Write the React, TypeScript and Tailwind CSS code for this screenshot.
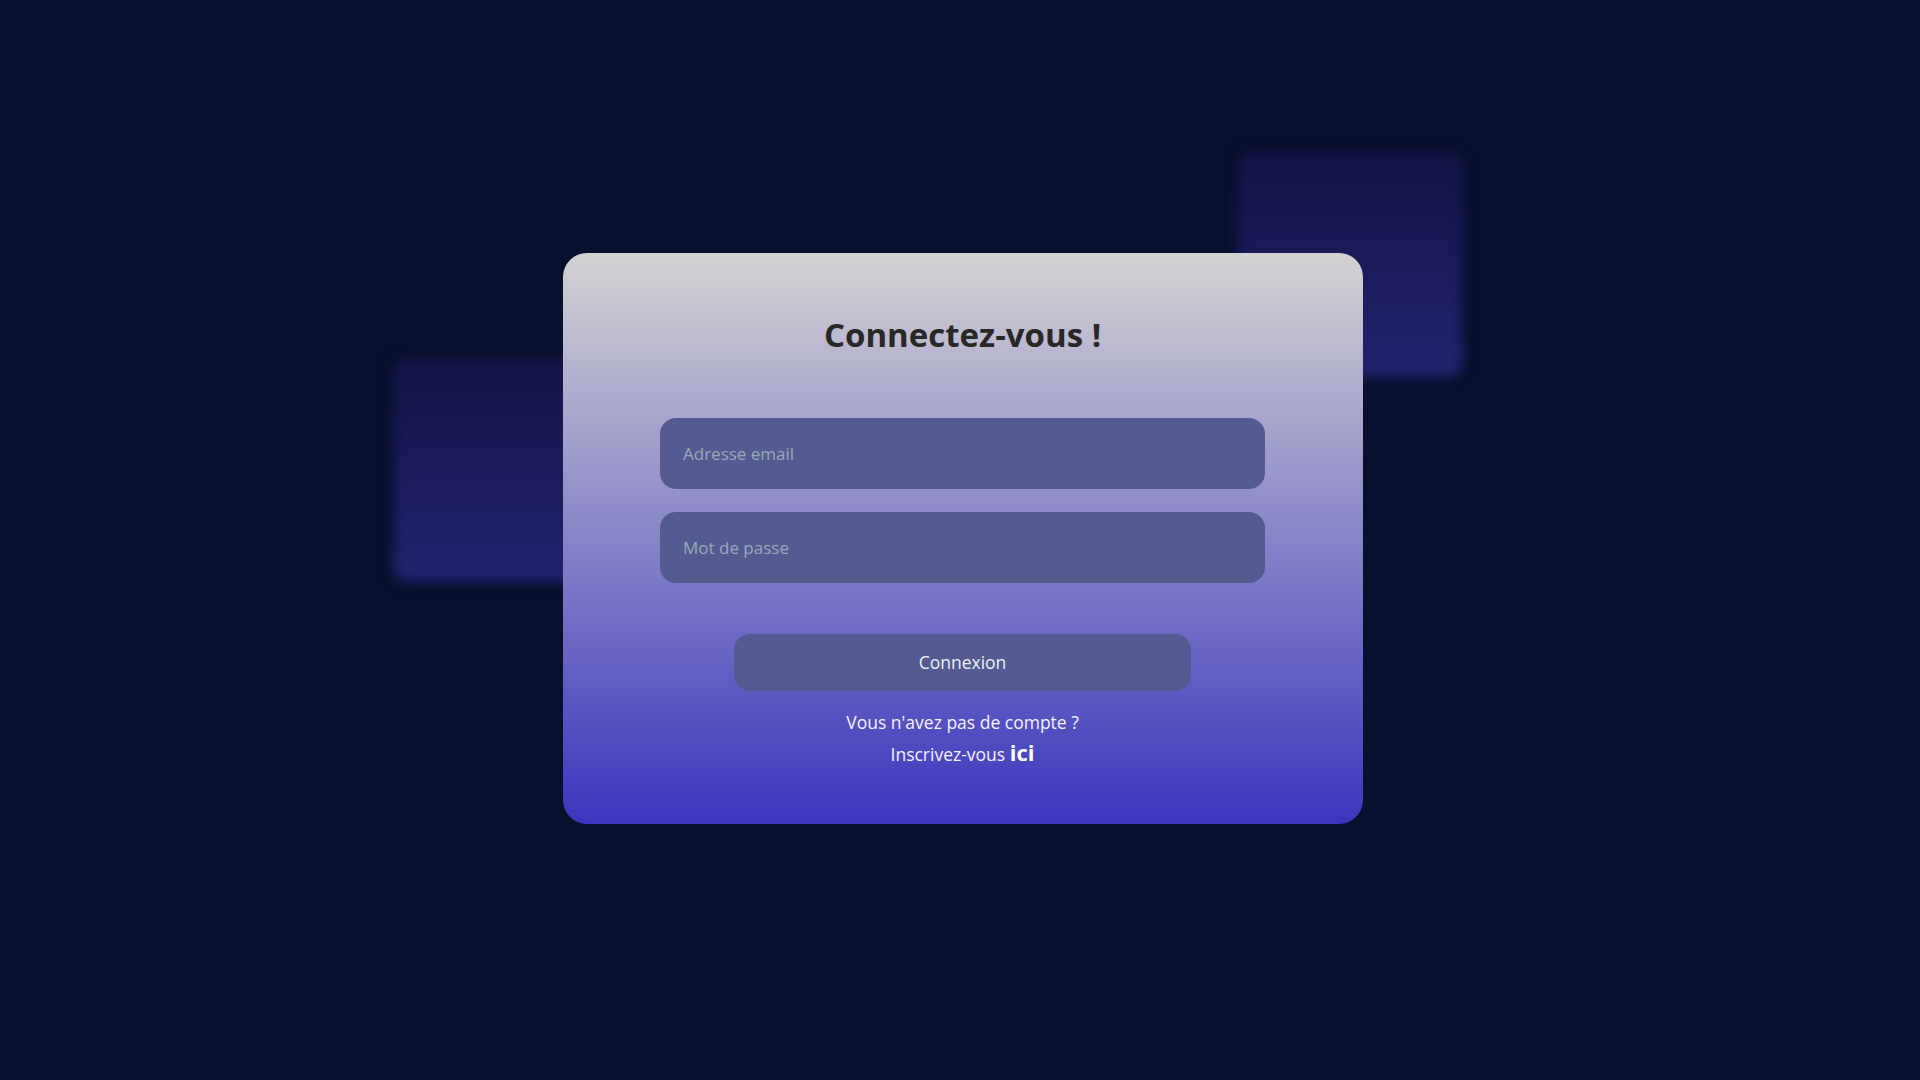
const LoginCard: React.FC = () => {
  return (
    <div className="relative w-[800px] h-[571px]">
      {/* blurred squares behind the card */}
      <div className="absolute left-[675px] top-[-101px] w-[225px] h-[225px] rounded-[14px] bg-[linear-gradient(to_bottom,#151446,#21226f)] blur-[6px]" />
      <div className="absolute left-[-170px] top-[104px] w-[225px] h-[225px] rounded-[14px] bg-[linear-gradient(to_bottom,#151446,#21226f)] blur-[6px]" />

      <div className="relative flex flex-col items-center w-full h-full rounded-[24px] bg-[linear-gradient(to_bottom,#d3d3d3,#3b35bd)] pt-[62px]">
        <h1 className="text-[33px] leading-[40px] font-bold text-[#2a2826]">
          Connectez-vous !
        </h1>

        <div className="flex flex-col gap-[23px] mt-[63px]">
          <input
            type="email"
            placeholder="Adresse email"
            className="w-[605px] h-[71px] rounded-[16px] bg-[#535b91] px-[23px] text-[17px] text-white placeholder:text-[#9ea6b9] outline-none"
          />
          <input
            type="password"
            placeholder="Mot de passe"
            className="w-[605px] h-[71px] rounded-[16px] bg-[#535b91] px-[23px] text-[17px] text-white placeholder:text-[#9ea6b9] outline-none"
          />
        </div>

        <button className="mt-[51px] w-[457px] h-[57px] rounded-[16px] bg-[#535b91] text-[17.5px] text-[#eeeef6]">
          Connexion
        </button>

        <div className="mt-[15px] flex flex-col items-center text-[17.5px] leading-[32px] text-[#f3f2ff]">
          <p>Vous n'avez pas de compte ?</p>
          <p>
            Inscrivez-vous{" "}
            <a href="#" className="text-[22px] leading-none font-bold text-white">
              ici
            </a>
          </p>
        </div>
      </div>
    </div>
  );
};

export default function App() {
  return (
    <div
      className="flex items-center justify-center w-full h-screen pl-[5px] pb-[3px] bg-[#08102d] overflow-hidden"
      style={{ fontFamily: '"Open Sans", "Noto Sans", sans-serif' }}
    >
      <LoginCard />
    </div>
  );
}
